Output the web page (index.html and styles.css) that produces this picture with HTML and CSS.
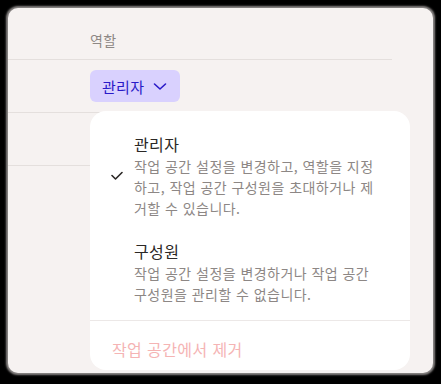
FILE: index.html
```html
<!DOCTYPE html>
<html lang="ko">

<head>
    <meta charset="UTF-8">
    <meta name="viewport" content="width=device-width, initial-scale=1.0">
    <title>역할</title>
    <link rel="stylesheet" href="styles.css">
</head>

<body>
    <div class="panel">
        <div class="table">
            <div class="row head">
                <span class="head-label">역할</span>
            </div>
            <div class="row">
                <button class="role-btn">
                    <span>관리자</span>
                    <svg width="14" height="14" viewBox="0 0 14 14">
                        <path d="M1.5 5 L7 10 L12.5 5" fill="none" stroke="#2a1ac8" stroke-width="1.6"
                            stroke-linecap="round" stroke-linejoin="round" />
                    </svg>
                </button>
            </div>
            <div class="row"></div>
        </div>

        <!-- 역할 선택 드롭다운 -->
        <div class="menu">
            <ul class="options">
                <li class="option">
                    <span class="check">
                        <svg width="12" height="10" viewBox="0 0 12 10">
                            <path d="M1 4.5 L4.5 8 L11 1.5" fill="none" stroke="#2b2826" stroke-width="1.6"
                                stroke-linecap="round" stroke-linejoin="round" />
                        </svg>
                    </span>
                    <div class="option-text">
                        <div class="option-title">관리자</div>
                        <div class="option-desc">작업 공간 설정을 변경하고, 역할을 지정하고, 작업 공간 구성원을 초대하거나 제거할 수 있습니다.</div>
                    </div>
                </li>
                <li class="option">
                    <span class="check"></span>
                    <div class="option-text">
                        <div class="option-title">구성원</div>
                        <div class="option-desc">작업 공간 설정을 변경하거나 작업 공간 구성원을 관리할 수 없습니다.</div>
                    </div>
                </li>
            </ul>
            <div class="menu-foot">작업 공간에서 제거</div>
        </div>
    </div>
</body>

</html>
```

FILE: styles.css
```css
* {
    padding: 0;
    margin: 0;
    list-style: none;
    border: 0;
    box-sizing: border-box;
}

body {
    background: #000;
    font-family: "Noto Sans CJK KR", "Noto Sans", sans-serif;
}

.panel {
    position: relative;
    margin: 8px;
    height: 365px;
    background: #f6f2f1;
    border-radius: 10px;
    box-shadow: 0 0 2px 2px #8a8685;
    overflow: hidden;
}

.table {
    width: 384px;
}

.row {
    display: flex;
    align-items: center;
    padding-left: 82px;
    height: 53px;
    border-bottom: 1px solid #e4dfdd;
}

.row.head {
    height: 52px;
    padding-top: 12px;
}

.head-label {
    font-size: 14px;
    line-height: 20px;
    color: #8e8885;
    letter-spacing: 0.3px;
}

.role-btn {
    display: flex;
    align-items: center;
    gap: 9px;
    height: 32px;
    padding: 0 13px 0 12px;
    background: #d9d1fe;
    border-radius: 6px;
    font-family: inherit;
    font-size: 15px;
    letter-spacing: 0.3px;
    color: #2a1ac8;
}

.role-btn svg {
    display: block;
}

.menu {
    position: absolute;
    left: 82px;
    top: 103px;
    width: 320px;
    background: #fff;
    border-radius: 16px;
}

.options {
    padding: 11px 0 5px;
}

.option {
    display: flex;
    align-items: center;
    padding: 10px 25px 10px 21px;
}

.check {
    width: 14px;
    margin-right: 9px;
    flex-shrink: 0;
}

.check svg {
    display: block;
}

.option-text {
    width: 250px;
}

.option-title {
    font-size: 16px;
    line-height: 24px;
    letter-spacing: 0.4px;
    color: #2b2826;
}

.option-desc {
    font-size: 14px;
    line-height: 21px;
    letter-spacing: 0.45px;
    color: #8d8785;
}

.menu-foot {
    border-top: 1px solid #ece8e7;
    padding: 16px 22px 9px;
    font-size: 16px;
    line-height: 24px;
    letter-spacing: 0.4px;
    color: #f5b4b4;
}
```
